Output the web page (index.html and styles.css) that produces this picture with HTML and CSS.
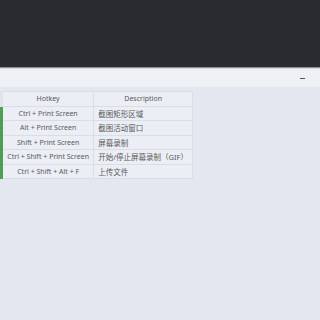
FILE: index.html
```html
<!DOCTYPE html>
<html>
<head>
<meta charset="utf-8">
<link rel="stylesheet" href="styles.css">
</head>
<body>
<div class="titlebar"></div>
<div class="toolbar"><span class="min"></span></div>
<div class="content">
  <table class="keys">
    <thead>
      <tr><th class="c1">Hotkey</th><th class="c2">Description</th></tr>
    </thead>
    <tbody>
      <tr><td class="c1">Ctrl + Print Screen</td><td class="c2">截图矩形区域</td></tr>
      <tr><td class="c1">Alt + Print Screen</td><td class="c2">截图活动窗口</td></tr>
      <tr><td class="c1">Shift + Print Screen</td><td class="c2">屏幕录制</td></tr>
      <tr><td class="c1">Ctrl + Shift + Print Screen</td><td class="c2">开始/停止屏幕录制（GIF）</td></tr>
      <tr><td class="c1">Ctrl + Shift + Alt + F</td><td class="c2">上传文件</td></tr>
    </tbody>
  </table>
</div>
</body>
</html>
```
FILE: styles.css
```css
html, body {
  margin: 0;
  padding: 0;
  height: 100%;
  background: #e3e7f0;
  font-family: "Noto Sans", "Noto Sans CJK SC", sans-serif;
}
.titlebar {
  height: 67px;
  background: #2a2b2f;
  border-bottom: 1px solid #8a8e94;
}
.toolbar {
  height: 18px;
  background: #edf1f6;
  border-top: 1px solid #d6dae0;
  display: flex;
  align-items: center;
  justify-content: flex-end;
  padding-right: 15px;
}
.min {
  width: 5px;
  height: 1px;
  background: #555;
}
.content {
  padding-top: 4px;
}
.keys {
  border-collapse: collapse;
  font-size: 7px;
  color: #5a5a5a;
  width: 193px;
}
.keys th, .keys td {
  height: 13.5px;
  padding: 0 4px;
  border: 1px solid #d9dde5;
  background: #ebeef4;
  font-weight: normal;
  white-space: nowrap;
}
.keys th.c1, .keys td.c1 {
  text-align: center;
  width: 86px;
}
.keys th.c2 {
  text-align: center;
}
.keys td.c2 {
  text-align: left;
  font-size: 7.5px;
}
.keys td.c1 {
  border-left: 3px solid #4e9e55;
}
.keys th.c1 {
  border-left: 3px solid #dfe3ea;
}
```
